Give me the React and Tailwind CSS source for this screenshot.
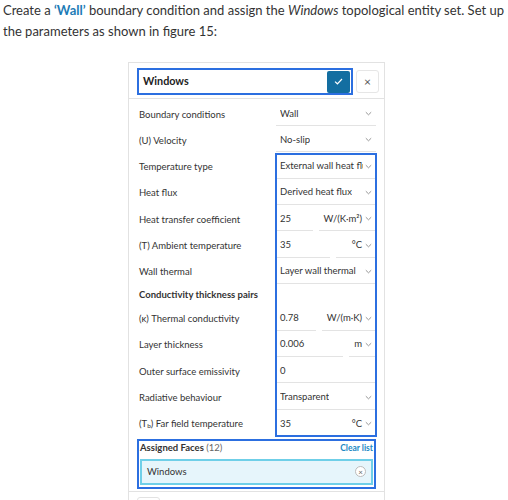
import React from "react";

const Chevron = () => (
  <svg width="7" height="5" viewBox="0 0 7 5" className="shrink-0">
    <path d="M0.8 1.2 L3.5 3.8 L6.2 1.2" fill="none" stroke="#8a8a8a" strokeWidth="0.9" />
  </svg>
);

function Label({ children }) {
  return (
    <div className="flex items-center h-[26.3px] pt-[1px] text-[9.5px] text-[#333] whitespace-nowrap">
      {children}
    </div>
  );
}

function Select({ value }) {
  return (
    <div className="h-[26.3px] flex items-center">
      <div className="flex-1 min-w-0 h-[24px] flex items-center justify-between gap-[2px] border-b border-[#e3e3e3] pl-[4px] pr-[4px]">
        <span className="min-w-0 overflow-hidden whitespace-nowrap text-[9.5px] text-[#333]">{value}</span>
        <Chevron />
      </div>
    </div>
  );
}

function Num({ value, unit, numW }) {
  return (
    <div className="h-[26.3px] flex items-center gap-[6px]">
      <div className={`h-[24px] flex items-center border-b border-[#e3e3e3] pl-[4px] ${numW}`}>
        <span className="text-[9.5px] text-[#333]">{value}</span>
      </div>
      {unit && (
        <div className="flex-1 h-[24px] flex items-center justify-end gap-[3px] border-b border-[#e3e3e3] pr-[4px]">
          <span className="text-[9.5px] text-[#333]">{unit}</span>
          <Chevron />
        </div>
      )}
    </div>
  );
}

export default function App() {
  return (
    <div className="w-[508px] h-[500px] overflow-hidden bg-white font-['Lato','Liberation_Sans',sans-serif]">
      <p className="px-[3px] text-[13px] leading-[21px] text-[#333]">
        Create a <span className="font-bold text-[#1d7bb6]">‘Wall’</span> boundary condition and assign the{" "}
        <em>Windows</em> topological entity set. Set up the parameters as shown in figure 15:
      </p>

      <div className="ml-[128px] mt-[20px] w-[257px] border border-[#e2e2e2] border-b-0">
        {/* header */}
        <div className="flex items-center gap-[3px] pl-[8px] pr-[5px] pt-[5px] pb-[3px] border-b border-[#e2e2e2]">
          <div className="w-[216px] h-[27px] border-2 border-[#2c6fe0] flex items-center justify-between pl-[4px] pr-[1px]">
            <span className="text-[10.8px] font-bold text-[#222]">Windows</span>
            <div className="w-[23px] h-[22px] bg-[#136ea1] rounded-[2px] flex items-center justify-center">
              <svg width="9" height="7" viewBox="0 0 9 7">
                <path d="M1 3.6 L3.4 5.8 L8 1" fill="none" stroke="#fff" strokeWidth="1.2" />
              </svg>
            </div>
          </div>
          <div className="w-[23px] h-[23px] border border-[#e6e6e6] rounded-[3px] flex items-center justify-center text-[12px] text-[#555] leading-none">
            ×
          </div>
        </div>

        {/* parameters */}
        <div className="relative flex pl-[10px] pr-[8px] pt-[2px]">
          <div className="w-[137px] flex flex-col">
            <Label>Boundary conditions</Label>
            <Label>(U) Velocity</Label>
            <Label>Temperature type</Label>
            <Label>Heat flux</Label>
            <Label>Heat transfer coefficient</Label>
            <Label>(T) Ambient temperature</Label>
            <Label>Wall thermal</Label>
            <div className="h-[20.4px] flex items-center text-[9.5px] font-bold text-[#333]">
              Conductivity thickness pairs
            </div>
            <Label>(κ) Thermal conductivity</Label>
            <Label>Layer thickness</Label>
            <Label>Outer surface emissivity</Label>
            <Label>Radiative behaviour</Label>
            <Label>
              (T<sub className="text-[6.5px]">b</sub>) Far field temperature
            </Label>
          </div>
          <div className="w-[100px] flex flex-col">
            <Select value="Wall" />
            <Select value="No-slip" />
            <Select value="External wall heat flux" />
            <Select value="Derived heat flux" />
            <Num value="25" unit="W/(K·m²)" numW="w-[37px]" />
            <Num value="35" unit="°C" numW="w-[54px]" />
            <Select value="Layer wall thermal" />
            <div className="h-[20.4px]" />
            <Num value="0.78" unit="W/(m·K)" numW="w-[40px]" />
            <Num value="0.006" unit="m" numW="w-[67px]" />
            <Num value="0" numW="w-[100px]" />
            <Select value="Transparent" />
            <div className="h-[26.3px] flex items-center justify-between pl-[4px] pr-[4px]">
              <span className="text-[9.5px] text-[#333]">35</span>
              <span className="flex items-center gap-[3px] text-[9.5px] text-[#333]">
                °C <Chevron />
              </span>
            </div>
          </div>
          {/* highlight */}
          <div className="absolute left-[146px] top-[54px] w-[102px] h-[284px] border-2 border-[#2c6fe0] pointer-events-none" />
        </div>

        {/* assigned faces */}
        <div className="mx-[8px] mt-[2px] border-2 border-[#2c6fe0] px-[1px] pb-[2px]">
          <div className="flex items-center justify-between h-[18px] pb-[3px]">
            <span className="text-[9.5px] text-[#333]">
              <span className="font-bold">Assigned Faces</span> <span className="text-[#666]">(12)</span>
            </span>
            <span className="text-[8.5px] font-bold text-[#2189c4]">Clear list</span>
          </div>
          <div className="h-[26px] bg-[#e6f5fb] border-2 border-[#6fcfe8] flex items-center justify-between pl-[5px] pr-[5px]">
            <span className="text-[9.5px] text-[#333]">Windows</span>
            <span className="w-[11px] h-[11px] rounded-full border border-[#bbb] bg-white flex items-center justify-center text-[8px] text-[#666] leading-none">
              ×
            </span>
          </div>
        </div>

        <div className="mt-[2px] border-t border-[#e2e2e2] h-[20px] pl-[8px] pt-[5px]">
          <div className="w-[23px] h-[20px] border border-[#e2e2e2] rounded-[3px]" />
        </div>
      </div>
    </div>
  );
}
